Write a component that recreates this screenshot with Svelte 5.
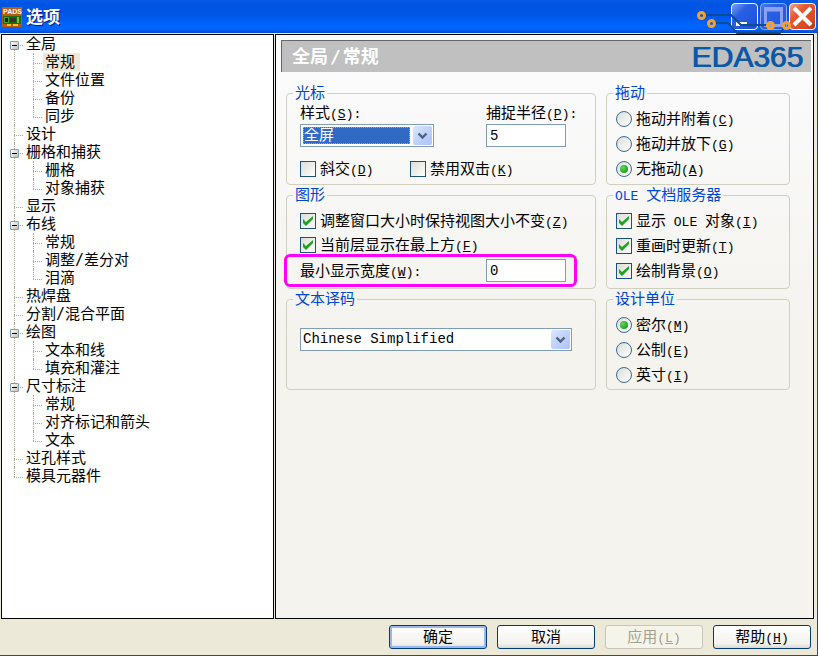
<script lang="ts">
  type Node = { label: string; open?: boolean; children?: string[] };

  let tree: Node[] = $state([
    { label: '全局', open: true, children: ['常规', '文件位置', '备份', '同步'] },
    { label: '设计' },
    { label: '栅格和捕获', open: true, children: ['栅格', '对象捕获'] },
    { label: '显示' },
    { label: '布线', open: true, children: ['常规', '调整/差分对', '泪滴'] },
    { label: '热焊盘' },
    { label: '分割/混合平面' },
    { label: '绘图', open: true, children: ['文本和线', '填充和灌注'] },
    { label: '尺寸标注', open: true, children: ['常规', '对齐标记和箭头', '文本'] },
    { label: '过孔样式' },
    { label: '模具元器件' }
  ]);

  let selected = $state('全局/常规');
  let style = $state('全屏');
  let encoding = $state('Chinese Simplified');
  let snapRadius = $state('5');
  let minWidth = $state('0');
  let diagonal = $state(false);
  let noDoubleClick = $state(false);
  let keepView = $state(true);
  let layerOnTop = $state(true);
  let drag = $state('A');
  let unit = $state('M');

  const dragModes = [
    { text: '拖动并附着', key: 'C' },
    { text: '拖动并放下', key: 'G' },
    { text: '无拖动', key: 'A' }
  ];
  const units = [
    { text: '密尔', key: 'M' },
    { text: '公制', key: 'E' },
    { text: '英寸', key: 'I' }
  ];
</script>

{#snippet hotkey(key: string, tail = '')}<span class="latin">(<u>{key}</u>){tail}</span>{/snippet}

{#snippet arrow()}
  <svg class="arrow" viewBox="0 0 19 19" aria-hidden="true">
    <path d="M5.5 7.5l4 4 4-4" fill="none" stroke="#4d6185" stroke-width="2.4" />
  </svg>
{/snippet}

<div class="window">
  <header class="titlebar">
    <svg class="app-icon" viewBox="0 0 20 20" aria-hidden="true">
      <rect width="20" height="20" fill="#b85a10" />
      <text x="1" y="7" class="icon-text">PADS</text>
      <rect x="1" y="9" width="18" height="8" fill="#1f6b12" />
      <rect x="2" y="10" width="5" height="6" fill="#3fa02a" />
      <rect x="3" y="11" width="3" height="4" fill="#222" />
      <rect x="8" y="11" width="6" height="4" fill="#333" />
      <rect x="15" y="10" width="2" height="6" fill="#7fc414" />
      <path d="M5 18h4M11 18h5" stroke="#f5c21c" stroke-width="2" />
    </svg>
    <h1>选项</h1>
    <div class="controls">
      <button type="button" class="ctl" aria-label="最小化">
        <svg viewBox="0 0 25 25"><rect x="4" y="18" width="11" height="4" fill="#fff" /></svg>
      </button>
      <button type="button" class="ctl dim" aria-label="最大化">
        <svg viewBox="0 0 25 25"><path d="M4.500 4.500h16v17h-16zM4.500 6h16" fill="none" stroke="#8aa2f0" stroke-width="3" /></svg>
      </button>
      <button type="button" class="ctl close" aria-label="关闭">
        <svg viewBox="0 0 25 25"><path d="M4 4l17 17M21 4L4 21" stroke="#fff" stroke-width="4" /></svg>
      </button>
    </div>
    <svg class="traces" viewBox="0 0 100 36" aria-hidden="true">
      <g fill="none" stroke="#084c98" stroke-width="2">
        <path d="M10 15h27l10 10h27" />
        <path d="M20 23h14l9 10h43l4-5" />
      </g>
      <g fill="none" stroke="#f7a12b" stroke-width="3">
        <circle cx="7.500" cy="15.500" r="3" />
        <circle cx="17.500" cy="23.500" r="3" />
        <circle cx="76.500" cy="25.500" r="3" />
        <circle cx="92.500" cy="25.500" r="3" />
      </g>
    </svg>
  </header>

  <main>
    <nav class="tree-pane" aria-label="选项分类">
      <ul class="tree">
        {#each tree as node}
          <li>
            {#if node.children}
              <button
                type="button"
                class="toggle"
                class:closed={!node.open}
                aria-label={node.label}
                aria-expanded={node.open}
                onclick={() => (node.open = !node.open)}
              ></button>
            {/if}
            <button type="button" class="item" class:active={selected === node.label} onclick={() => (selected = node.label)}>{node.label}</button>
            {#if node.children && node.open}
              <ul>
                {#each node.children as child}
                  {@const path = `${node.label}/${child}`}
                  <li>
                    <button type="button" class="item" class:active={selected === path} onclick={() => (selected = path)}>{child}</button>
                  </li>
                {/each}
              </ul>
            {/if}
          </li>
        {/each}
      </ul>
    </nav>

    <section class="page">
      <div class="banner">
        <h2>全局<span>/</span>常规</h2>
        <strong class="brand">EDA365</strong>
      </div>

      <form class="groups" onsubmit={(e) => e.preventDefault()}>
        <fieldset>
          <legend>光标</legend>
          <div class="body cursor">
            <div class="pair">
              <label for="style">样式{@render hotkey('S', ':')}</label>
              <label for="snap">捕捉半径{@render hotkey('P', ':')}</label>
              <span class="combo short focused">
                <select id="style" bind:value={style}>
                  <option>全屏</option>
                  <option>正常</option>
                </select>
                {@render arrow()}
              </span>
              <input id="snap" class="field" type="text" bind:value={snapRadius} />
            </div>
            <div class="checks">
              <label class="option"><input type="checkbox" bind:checked={diagonal} /><span>斜交{@render hotkey('D')}</span></label>
              <label class="option"><input type="checkbox" bind:checked={noDoubleClick} /><span>禁用双击{@render hotkey('K')}</span></label>
            </div>
          </div>
        </fieldset>

        <fieldset>
          <legend>拖动</legend>
          <div class="body side">
            {#each dragModes as mode}
              <label class="option"><input type="radio" name="drag" value={mode.key} bind:group={drag} /><span>{mode.text}{@render hotkey(mode.key)}</span></label>
            {/each}
          </div>
        </fieldset>

        <fieldset>
          <legend>图形</legend>
          <div class="body drawing">
            <label class="option"><input type="checkbox" bind:checked={keepView} /><span>调整窗口大小时保持视图大小不变{@render hotkey('Z')}</span></label>
            <label class="option"><input type="checkbox" bind:checked={layerOnTop} /><span>当前层显示在最上方{@render hotkey('F')}</span></label>
            <div class="pair marked">
              <label for="min-width">最小显示宽度{@render hotkey('W', ':')}</label>
              <input id="min-width" class="field" type="text" bind:value={minWidth} />
            </div>
          </div>
        </fieldset>

        <fieldset>
          <legend><span class="latin">{'OLE '}</span>文档服务器</legend>
          <div class="body side">
            <label class="option"><input type="checkbox" checked /><span>显示<span class="latin">{' OLE '}</span>对象{@render hotkey('I')}</span></label>
            <label class="option"><input type="checkbox" checked /><span>重画时更新{@render hotkey('T')}</span></label>
            <label class="option"><input type="checkbox" checked /><span>绘制背景{@render hotkey('O')}</span></label>
          </div>
        </fieldset>

        <fieldset>
          <legend>文本译码</legend>
          <div class="body encoding">
            <span class="combo long">
              <select aria-label="文本译码" class="latin" bind:value={encoding}>
                <option>Chinese Simplified</option>
                <option>English</option>
              </select>
              {@render arrow()}
            </span>
          </div>
        </fieldset>

        <fieldset>
          <legend>设计单位</legend>
          <div class="body side">
            {#each units as u}
              <label class="option"><input type="radio" name="unit" value={u.key} bind:group={unit} /><span>{u.text}{@render hotkey(u.key)}</span></label>
            {/each}
          </div>
        </fieldset>
      </form>
    </section>
  </main>

  <footer>
    <button type="button" class="push default">确定</button>
    <button type="button" class="push">取消</button>
    <button type="button" class="push" disabled>应用{@render hotkey('L')}</button>
    <button type="button" class="push">帮助{@render hotkey('H')}</button>
  </footer>
</div>

<style>
  :global(body) {
    margin: 0;
  }

  .window {
    display: flex;
    flex-direction: column;
    min-height: 100vh;
    box-sizing: border-box;
    border-right: 1px solid #0a48d8;
    border-bottom: 1px solid #0a48d8;
    background: #ece9d8;
    color: #000;
    font-family: 'DejaVu Sans Mono', 'Noto Sans CJK SC', monospace;
    font-size: 15px;
    line-height: 18px;
  }

  button,
  select,
  input {
    font: inherit;
    color: inherit;
    margin: 0;
  }

  .latin {
    font-family: 'Liberation Mono', monospace;
    font-size: 13px;
    line-height: 12px;
    white-space: pre;
  }

  /* Title bar */
  .titlebar {
    position: relative;
    display: flex;
    align-items: center;
    gap: 4px;
    height: 33px;
    box-sizing: border-box;
    padding: 0 2px;
    margin-right: -1px;
    background: linear-gradient(#0a5ae6 0%, #0054e3 12%, #0055e5 45%, #0062fb 70%, #0066ff 88%, #0048d0 100%);
  }

  .app-icon {
    width: 20px;
    height: 20px;
  }

  .icon-text {
    font: bold 7px 'Liberation Sans', sans-serif;
    fill: #fff;
  }

  h1 {
    flex: 1;
    margin: 0;
    font-size: 17px;
    line-height: 20px;
    color: #fff;
    text-shadow: 1px 1px #0a1883;
  }

  .controls {
    display: flex;
    gap: 2px;
  }

  .ctl {
    width: 27px;
    height: 27px;
    padding: 0;
    box-sizing: border-box;
    border: 1px solid #fff;
    border-radius: 4px;
    background: linear-gradient(135deg, #7ba2f3, #2a5fe2 35%, #2258dd 70%, #1a4bc4);
  }

  .ctl svg {
    display: block;
    width: 25px;
    height: 25px;
  }

  .ctl.dim {
    border-color: #8faaf0;
    background: linear-gradient(135deg, #4a78e8, #2a5fe2 35%, #2258dd);
  }

  .ctl.close {
    background: linear-gradient(135deg, #f0a088, #e4572f 35%, #dc4a20 75%, #b83410);
  }

  .traces {
    position: absolute;
    top: 0;
    right: 24px;
    width: 100px;
    height: 36px;
    pointer-events: none;
  }

  /* Panes */
  main {
    flex: 1;
    display: grid;
    grid-template-columns: 273px 1fr;
    gap: 1px;
    padding: 1px 3px 0 1px;
  }

  .tree-pane,
  .page {
    border: 1px solid #000;
    min-width: 0;
  }

  .tree-pane {
    background: #fff;
  }

  .page {
    background: linear-gradient(#fcfcfe, #f4f3ee 300px);
  }

  /* Tree */
  .tree,
  .tree ul {
    list-style: none;
    margin: 0;
    padding: 0;
  }

  .tree li {
    position: relative;
    padding-left: 22px;
  }

  .tree ul li {
    padding-left: 19px;
  }

  .tree li::before,
  .tree li::after {
    content: '';
    position: absolute;
    left: 12px;
  }

  .tree li::before {
    top: 0;
    bottom: 0;
    border-left: 1px dotted #aca899;
  }

  .tree li::after {
    top: 10px;
    width: 9px;
    border-top: 1px dotted #aca899;
  }

  .tree ul li::before,
  .tree ul li::after {
    left: 9px;
  }

  .tree > li:first-child::before {
    top: 10px;
  }

  .tree li:last-child::before {
    bottom: auto;
    height: 10px;
  }

  .item {
    display: block;
    padding: 0 5px 0 2px;
    border: 0;
    background: none;
    line-height: 18px;
    white-space: nowrap;
  }

  .item.active {
    background: #ece9d8;
  }

  .toggle {
    position: absolute;
    z-index: 1;
    top: 6px;
    left: 8px;
    width: 9px;
    height: 9px;
    padding: 0;
    box-sizing: border-box;
    border: 1px solid #7b9ebd;
    border-radius: 1px;
    background:
      linear-gradient(#000, #000) center / 5px 1px no-repeat,
      linear-gradient(135deg, #fff, #c8c0b0);
  }

  .toggle.closed {
    background:
      linear-gradient(#000, #000) center / 5px 1px no-repeat,
      linear-gradient(#000, #000) center / 1px 5px no-repeat,
      linear-gradient(135deg, #fff, #c8c0b0);
  }

  /* Page header */
  .banner {
    display: flex;
    align-items: center;
    justify-content: space-between;
    height: 32px;
    box-sizing: border-box;
    margin: 5px 2px 0 5px;
    padding: 0 8px 0 10px;
    border-top: 1px solid #666;
    border-left: 1px solid #666;
    background: #c0c0c0;
  }

  h2 {
    margin: 0;
    font-size: 18px;
    line-height: 24px;
    color: #fff;
  }

  h2 span {
    padding: 0 2px;
  }

  .brand {
    font: 30px/30px 'Liberation Sans', sans-serif;
    color: #0a58a8;
    text-shadow: 1px 0 #0a58a8;
  }

  /* Groups */
  .groups {
    display: grid;
    grid-template-columns: 310fr 184fr;
    gap: 2px 10px;
    padding: 13px 23px 0 10px;
  }

  fieldset {
    min-width: 0;
    margin: 0;
    padding: 0;
    border: 1px solid #d0d0bf;
    border-radius: 4px;
  }

  legend {
    margin-left: 6px;
    padding: 0 2px;
    line-height: 16px;
    color: #0046d5;
  }

  .body {
    display: flex;
    flex-direction: column;
    padding: 8px 13px 5px;
  }

  .body.cursor {
    gap: 12px;
    padding-top: 3px;
  }

  .body.drawing {
    gap: 4px;
    padding-bottom: 6px;
  }

  .body.side {
    gap: 5px;
    padding: 8px 9px 0;
  }

  .body.encoding {
    padding: 21px 13px 38px;
  }

  .pair {
    display: grid;
    grid-template-columns: 186px 1fr;
    gap: 2px 0;
    align-items: center;
  }

  .marked {
    position: relative;
  }

  .marked::after {
    content: '';
    position: absolute;
    inset: -5px 5px -5px -16px;
    border: 3px solid #f0f;
    border-radius: 6px;
    pointer-events: none;
  }

  .checks {
    display: grid;
    grid-template-columns: 110px 1fr;
  }

  .option {
    display: flex;
    align-items: center;
    gap: 4px;
    height: 20px;
    white-space: nowrap;
  }

  .field {
    width: 80px;
    height: 23px;
    box-sizing: border-box;
    padding: 0 3px;
    border: 1px solid #7f9db9;
    background: #fff;
    font-family: 'Liberation Mono', monospace;
    font-size: 14px;
  }

  .combo {
    display: flex;
    height: 23px;
    box-sizing: border-box;
    padding: 1px;
    border: 1px solid #7f9db9;
    background: #fff;
  }

  .combo.short {
    width: 134px;
  }

  .combo.long {
    width: 272px;
    max-width: 100%;
  }

  .combo select {
    flex: 1;
    min-width: 0;
    margin: 1px 3px 1px 1px;
    padding: 0;
    border: 0;
    outline: none;
    appearance: none;
    background: none;
    line-height: 17px;
  }

  .combo select.latin {
    font-size: 14px;
  }

  .combo.focused select {
    border: 1px dotted #e0a040;
    background: #316ac5;
    color: #fff;
    line-height: 15px;
  }

  .arrow {
    width: 19px;
    height: 19px;
    border-radius: 2px;
    background: linear-gradient(135deg, #dce6fe, #bccffb 60%, #aec4f8);
  }

  input[type='checkbox'],
  input[type='radio'] {
    flex: none;
    width: 16px;
    height: 16px;
    box-sizing: border-box;
    appearance: none;
    border: 1px solid #1c5180;
    background: linear-gradient(135deg, #dcdcd7, #fff);
  }

  input[type='radio'] {
    border-color: #3a6a96;
    border-radius: 50%;
  }

  input[type='checkbox']:checked::before {
    content: '';
    display: block;
    width: 14px;
    height: 14px;
    background: #21a121;
    clip-path: polygon(2px 5px, 5px 8px, 12px 2px, 12px 5px, 5px 12px, 2px 9px);
  }

  input[type='radio']:checked::before {
    content: '';
    display: block;
    width: 8px;
    height: 8px;
    margin: 3px;
    border-radius: 50%;
    background: radial-gradient(circle at 35% 35%, #5fd85c, #21a121 70%);
  }

  /* Buttons */
  footer {
    display: flex;
    justify-content: flex-end;
    gap: 10px;
    padding: 6px;
  }

  .push {
    width: 98px;
    height: 24px;
    box-sizing: border-box;
    padding: 0;
    border: 1px solid #003c74;
    border-radius: 3px;
    background: linear-gradient(#fff, #f3f2ed 80%, #dcd8cc);
    line-height: 18px;
  }

  .push.default {
    box-shadow: inset 0 0 0 2px #9ab8ee;
  }

  .push:disabled {
    border-color: #c9c7ba;
    background: #f5f4ea;
    color: #a1a192;
  }
</style>
